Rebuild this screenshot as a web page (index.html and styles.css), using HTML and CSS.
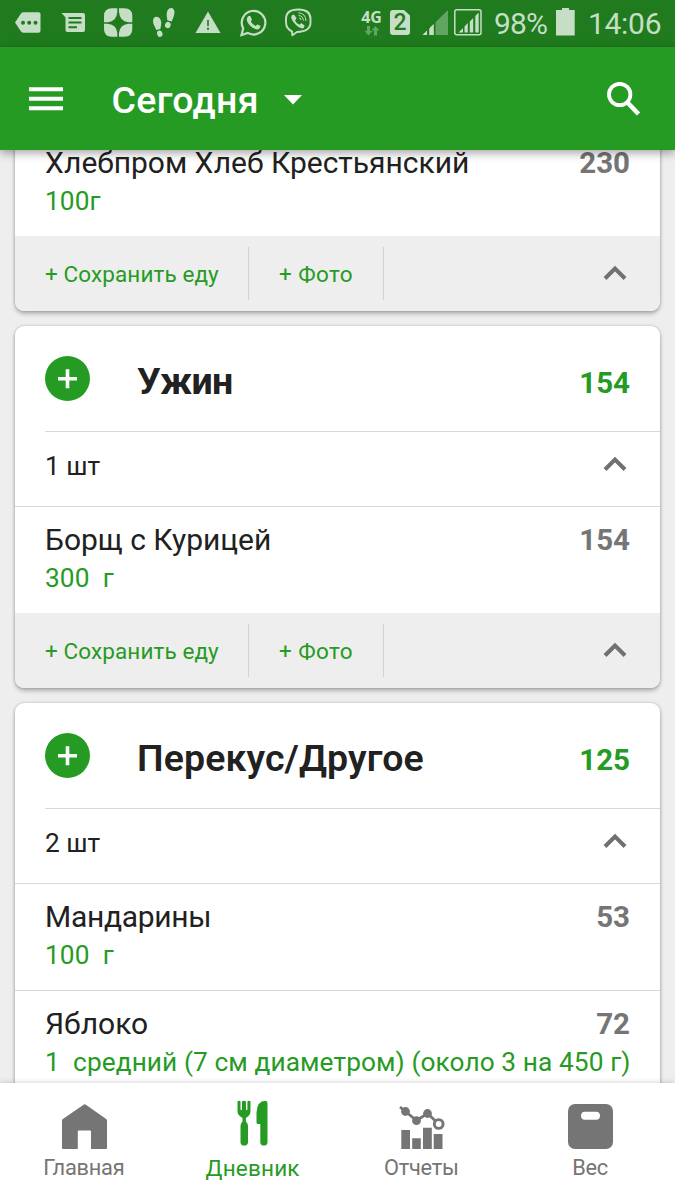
FILE: index.html
```html
<!DOCTYPE html>
<html lang="ru">
<head>
<meta charset="utf-8">
<title>Дневник</title>
<link rel="stylesheet" href="styles.css">
</head>
<body>
<div class="app">
  <div class="status">
    <div class="notifications">
      <svg class="cell" viewBox="5 0 45 47"><path fill="currentColor" d="M15 22.5 21 13.5Q22 12.3 23.5 12.3H38.5Q40.5 12.3 40.5 14.3V30.7Q40.5 32.7 38.5 32.7H23.5Q22 32.7 21 31.5Z"/><g fill="#1f7b1d"><circle cx="23" cy="22.7" r="2"/><circle cx="29.2" cy="22.7" r="2"/><circle cx="35.5" cy="22.7" r="2"/></g></svg>
      <svg class="cell" viewBox="50 0 45 47"><path fill="currentColor" d="M61.5 13H83Q85 13 85 15V30Q85 32 83 32H67.5Q65.5 32 65.5 30V17.5Z"/><path stroke="#1f7b1d" stroke-width="2" d="M68.5 18H81.500M68.500 22.500H81.500M68.500 27.200H77"/></svg>
      <svg class="cell" viewBox="95 0 45 47"><path fill="currentColor" d="M117.300 8.300V12Q116.500 21.500 108 22.200H104V16Q104 8.300 112 8.300ZM119 8.300V12Q119.800 21.500 128.300 22.200H132.300V16Q132.300 8.300 124.300 8.300ZM104 23.800H108Q116.500 24.600 117.300 33V36.700H112Q104 36.700 104 29ZM132.300 23.800H128.300Q119.800 24.600 119 33V36.700H124.300Q132.300 36.700 132.300 29Z"/></svg>
      <svg class="cell" viewBox="140 0 45 47"><g fill="currentColor"><path d="M155 17C158.500 15.500 161.500 19 161.300 23.500Q161 26.500 160.300 29L156.300 30Q155 27 153.500 24Q152 18.500 155 17Z"/><ellipse cx="159.800" cy="33.700" rx="2.700" ry="3.200" transform="rotate(-15 159.800 33.700)"/><path d="M172.500 8.200C169 7 166.500 10.500 166.700 15Q166.900 18 167.500 20.500L171.700 21.500Q173 18.500 174 15.500Q175.500 10 172.500 8.200Z"/><ellipse cx="167.800" cy="25" rx="2.800" ry="3.200" transform="rotate(15 167.800 25)"/></g></svg>
      <svg class="cell" viewBox="185 0 45 47"><path fill="currentColor" d="M208 11.500 220.500 33H195.500Z"/><path stroke="#1f7b1d" stroke-width="1.600" d="M208 20V26M208 27.500V30"/></svg>
      <svg class="cell" viewBox="230 0 45 47"><path fill="none" stroke="currentColor" stroke-width="2.200" d="M242.300 35 244 28.300A11.800 11.800 0 1 1 248.500 32.900Z" transform="translate(-.8 0)"/><path fill="currentColor" d="M248.200 16.200Q249.700 15 250.700 16.700L251.900 19.400Q251.500 20.700 250.800 21.500Q252.500 24.700 255.700 26Q256.800 24.300 257.700 24.500L260.500 26Q260.200 29 257.500 29.400C252.500 29.200 246.500 23.500 246.800 19Q247 17.200 248.200 16.200Z"/></svg>
      <svg class="cell" viewBox="275 0 45 47"><path fill="none" stroke="currentColor" stroke-width="1.900" stroke-linejoin="round" d="M292 31.300Q286 29 286 22V19Q286 9.500 298.300 9.500Q310.500 9.500 310.500 19V22.500Q310.500 31.500 297 32L292.300 35.200Z"/><path fill="currentColor" d="M292 15.200Q293.500 13.800 294.500 15.200L296.500 18Q296.500 19.200 295 20.300Q296.200 23.500 299.400 24.800Q300.500 23 301.500 23.200L304.700 25.400Q304.500 28 302 28.500C297 27.500 291 20 291.200 17Z"/><g fill="none" stroke="currentColor" stroke-width="1"><path d="M298.300 12.800Q305.800 13.300 306 21M298.600 15.400Q303 15.900 303.400 20.500M299 17.800Q300.900 18.100 301.200 20"/></g></svg>
    </div>
    <div class="system">
      <div class="net"><span>4G</span><svg width="16" height="10" viewBox="0 0 16 10" fill="#62a461"><path d="M3 0H6V5H8.500L4.500 9.500.500 5H3ZM10 9.500H13V4.500H15.500L11.500 0 7.500 4.500H10Z"/></svg></div>
      <div class="sim"><span>2</span></div>
      <svg width="32" height="47" viewBox="420 0 32 47"><path fill="#62a461" d="M448 10V35H422.500Z"/><path fill="#1f7b1d" d="M427 29V35H429.300V26ZM433.700 22V35H435.500V20Z"/><path fill="currentColor" d="M427 30.500V35H422.500ZM433.700 24V35H429.300V28.400Z"/></svg>
      <svg width="32" height="47" viewBox="452 0 32 47"><rect x="454.800" y="9.800" width="26.200" height="25" rx="2" fill="none" stroke="currentColor" stroke-width="1.500"/><path fill="currentColor" d="M463 28V32.500H458.500ZM467.800 23V32.500H464.500V26.500ZM473.200 18V32.500H469.800V21.500ZM478.700 12.500V32.500H475.300V16Z"/></svg>
      <span class="battery-text">98%</span>
      <svg width="20" height="47" viewBox="555 0 20 47"><path fill="currentColor" d="M562 8H569V10H574.700V35.500H556V10H562Z"/></svg>
      <span class="clock">14:06</span>
    </div>
  </div>

  <header class="bar">
    <svg width="34" height="24" viewBox="0 0 34 24"><path stroke="#fff" stroke-width="4" d="M0 2.200H34M0 11.700H34M0 21.200H34"/></svg>
    <h1 class="bar-title">Сегодня</h1>
    <svg class="caret" width="18" height="10" viewBox="0 0 18 10"><path fill="#fff" d="M0 0H18L9 9.500Z"/></svg>
    <svg class="search" width="34" height="34" viewBox="0 0 34 34"><circle cx="12.700" cy="12.500" r="10.700" fill="none" stroke="#fff" stroke-width="3.800"/><path d="M20.500 20.500 31.500 32" stroke="#fff" stroke-width="4.600"/></svg>
  </header>

  <main class="content">
    <section class="card card-top">
      <div class="item"><div class="line"><span>Хлебпром Хлеб Крестьянский</span><b>230</b></div><div class="portion">100г</div></div>
      <div class="actions"><span class="save">+ Сохранить еду</span><span class="photo">+ Фото</span><svg class="chev" width="24" height="16" viewBox="0 0 24 16"><path d="M2 13.500 12 3.500 22 13.500"/></svg></div>
    </section>

    <section class="card">
      <div class="meal"><svg width="45" height="45" viewBox="0 0 45 45"><circle cx="22.500" cy="22.500" r="22.500" fill="#269b24"/><path stroke="#fff" stroke-width="3.600" d="M13 22.800H32M22.500 13.300V32.300"/></svg><h2 class="short">Ужин</h2><b>154</b></div>
      <div class="count"><span>1 шт</span><svg class="chev" width="24" height="16" viewBox="0 0 24 16"><path d="M2 13.500 12 3.500 22 13.500"/></svg></div>
      <div class="item"><div class="line"><span>Борщ с Курицей</span><b>154</b></div><div class="portion">300&nbsp; г</div></div>
      <div class="actions"><span class="save">+ Сохранить еду</span><span class="photo">+ Фото</span><svg class="chev" width="24" height="16" viewBox="0 0 24 16"><path d="M2 13.500 12 3.500 22 13.500"/></svg></div>
    </section>

    <section class="card">
      <div class="meal"><svg width="45" height="45" viewBox="0 0 45 45"><circle cx="22.500" cy="22.500" r="22.500" fill="#269b24"/><path stroke="#fff" stroke-width="3.600" d="M13 22.800H32M22.500 13.300V32.300"/></svg><h2 class="medium">Перекус/Другое</h2><b>125</b></div>
      <div class="count"><span>2 шт</span><svg class="chev" width="24" height="16" viewBox="0 0 24 16"><path d="M2 13.500 12 3.500 22 13.500"/></svg></div>
      <div class="item"><div class="line"><span class="tight">Мандарины</span><b>53</b></div><div class="portion">100&nbsp; г</div></div>
      <div class="item divided"><div class="line"><span>Яблоко</span><b>72</b></div><div class="portion">1&nbsp; средний (7 см диаметром) (около 3 на 450 г)</div></div>
    </section>
  </main>

  <nav class="tabs">
    <div class="tab"><svg width="48" height="50" viewBox="60 1099 48 50"><path fill="currentColor" d="M62 1120.500Q62 1119.700 62.800 1119L84 1104.500Q84.700 1104 85.500 1104.500L106.200 1119Q107 1119.700 107 1120.500V1148Q107 1149 106 1149H91V1131.500Q91 1130.500 90 1130.500H78.800Q77.800 1130.500 77.800 1131.500V1149H63Q62 1149 62 1148Z"/></svg><span>Главная</span></div>
    <div class="tab active"><svg width="48" height="50" viewBox="229.500 1099 48 50"><path fill="currentColor" d="M238 1101.500Q239.500 1100 241 1101.500V1109.500Q241.700 1111 242.400 1109.500V1101.500Q244.500 1100 246.500 1101.500V1109.500Q247.200 1111 247.900 1109.500V1101.500Q249.500 1100 251 1101.500V1111.500Q251 1115 246.400 1118V1121.500Q248.500 1123 248.500 1126V1142.500Q248.300 1145.600 244.700 1145.600Q241.200 1145.600 241 1142.500V1126Q241 1123 243 1121.500V1118Q238 1115 238 1111.500ZM257 1112.500Q257.500 1101 266 1100.800Q268 1101 268 1103.500V1142.500Q267.700 1145.600 264.400 1145.600Q261 1145.600 260.800 1142.500V1124H258.500Q257 1124 257 1122.500Z"/></svg><span>Дневник</span></div>
    <div class="tab"><svg width="48" height="50" viewBox="398 1099 48 50"><path fill="currentColor" d="M401.300 1130H410V1149H401.300ZM412.200 1138.300H420.800V1149H412.200ZM423 1127.700H431.800V1149H423ZM433.700 1134H442.500V1149H433.700Z"/><path fill="none" stroke="currentColor" stroke-width="2.800" d="M400 1107 405.500 1111.500 416.500 1120.500 427.500 1113.500 435 1120.500"/><g fill="currentColor"><circle cx="405.500" cy="1111.500" r="4.400"/><circle cx="416.500" cy="1120.700" r="4.400"/><circle cx="427.500" cy="1113.500" r="4.400"/></g><circle cx="438.700" cy="1124" r="4.400" fill="#fff" stroke="currentColor" stroke-width="2.900"/></svg><span>Отчеты</span></div>
    <div class="tab"><svg width="48" height="50" viewBox="567 1099 48 50"><rect x="568" y="1104" width="45" height="45" rx="7" fill="currentColor"/><rect x="581" y="1111.800" width="19" height="8" rx="4" fill="#fff"/></svg><span>Вес</span></div>
  </nav>
</div>
</body>
</html>
```

FILE: styles.css
```css
* { box-sizing: border-box; }
body { margin: 0; font-family: Roboto, "Noto Sans", sans-serif; color: #212121; }
.app { width: 675px; height: 1200px; display: flex; flex-direction: column; overflow: hidden; background: #eee; }
svg { flex: none; display: block; }

.status { flex: none; height: 47px; background: #1f7b1d; color: #c6dec5; display: flex; justify-content: space-between; padding-left: 5px; }
.notifications { display: flex; }
.cell { width: 45px; height: 47px; }
.system { display: flex; width: 315px; }
.net { width: 23px; flex: none; margin-right: 7px; padding-top: 8px; display: flex; flex-direction: column; align-items: center; font: bold 16px/18px "Open Sans", sans-serif; }
.sim { width: 20px; flex: none; height: 25px; margin: 10px 10px 0 0; background: currentColor; border-radius: 3px; clip-path: polygon(0 0, 70% 0, 100% 22%, 100% 100%, 0 100%); font: 500 23px/26px Roboto, sans-serif; text-align: center; }
.sim span { color: #1f7b1d; }
.battery-text, .clock { flex: none; font-size: 30px; line-height: 47px; font-weight: 400; white-space: nowrap; }
.battery-text { width: 71px; padding-left: 10px; letter-spacing: -0.8px; }
.clock { padding-left: 13px; letter-spacing: -0.3px; }

.bar { flex: none; height: 103px; background: #269b24; color: #fff; display: flex; align-items: center; padding: 0 34px 0 29px; position: relative; z-index: 1; box-shadow: 0 3px 9px rgba(0,0,0,.36); }
.bar-title { margin: 2px 24px 0 48.5px; width: 147px; font-size: 37.5px; line-height: 44px; font-weight: 500; letter-spacing: 0.3px; white-space: nowrap; }
.caret { margin: 3px 0 0 1px; }
.search { margin-left: auto; margin-top: 1px; }

.content { flex: 1; min-height: 0; overflow: hidden; padding: 0 15px; display: flex; flex-direction: column; gap: 15px; }
.card { flex: none; background: #fff; border-radius: 9px; box-shadow: 0 3px 4px rgba(0,0,0,.24), 0 0 3px rgba(0,0,0,.24); }
.card-top { margin-top: -20px; }
.card b { font-weight: 700; font-size: 29.5px; }
.meal { height: 106px; margin-left: 30px; padding-right: 30px; border-bottom: 1px solid #d8d8d8; display: flex; align-items: center; }
.meal h2 { margin: 4px 0 0 47px; font-size: 37.5px; line-height: 44px; white-space: nowrap; }
.meal .short { font-weight: 700; letter-spacing: -0.7px; }
.meal .medium { font-weight: 600; letter-spacing: 0.1px; }
.meal b { margin: 8px 0 0 auto; color: #269b24; }
.count { height: 75px; padding: 0 33px 7px 30px; border-bottom: 1px solid #d8d8d8; display: flex; align-items: center; justify-content: space-between; font-size: 26.25px; }
.count .chev { margin-top: -4px; }
.item { height: 106px; padding: 15px 30px 0; }
.divided { height: 107px; border-top: 1px solid #d8d8d8; }
.line { display: flex; justify-content: space-between; font-size: 30px; line-height: 36px; white-space: nowrap; }
.line b { color: #757575; }
.tight { letter-spacing: -0.3px; }
.portion { margin-top: 4px; font-size: 26.25px; line-height: 32px; letter-spacing: 0.09px; color: #269b24; white-space: nowrap; }
.actions { height: 75px; padding: 11px 33px 11px 30px; background: #eee; border-radius: 0 0 9px 9px; display: flex; align-items: center; color: #269b24; font-size: 22.5px; letter-spacing: 0.1px; }
.save, .photo { height: 53px; line-height: 55px; border-right: 1.5px solid #d2d2d2; white-space: nowrap; flex: none; }
.save { width: 204px; }
.photo { width: 135px; padding-left: 30px; letter-spacing: 0.4px; }
.chev { fill: none; stroke: #707070; stroke-width: 4; }
.actions .chev { margin-left: auto; margin-top: -1px; }

.tabs { flex: none; height: 117px; background: #fff; display: grid; grid-template-columns: repeat(4, 1fr); position: relative; z-index: 1; box-shadow: 0 0 6px rgba(0,0,0,.2); }
.tab { display: flex; flex-direction: column; align-items: center; padding-top: 16px; color: #757575; font-size: 21.8px; line-height: 26px; letter-spacing: -0.25px; }
.tab span { margin: 6px 1px 0 0; }
.active { color: #269b24; font-size: 22.5px; letter-spacing: 0.2px; }
```
